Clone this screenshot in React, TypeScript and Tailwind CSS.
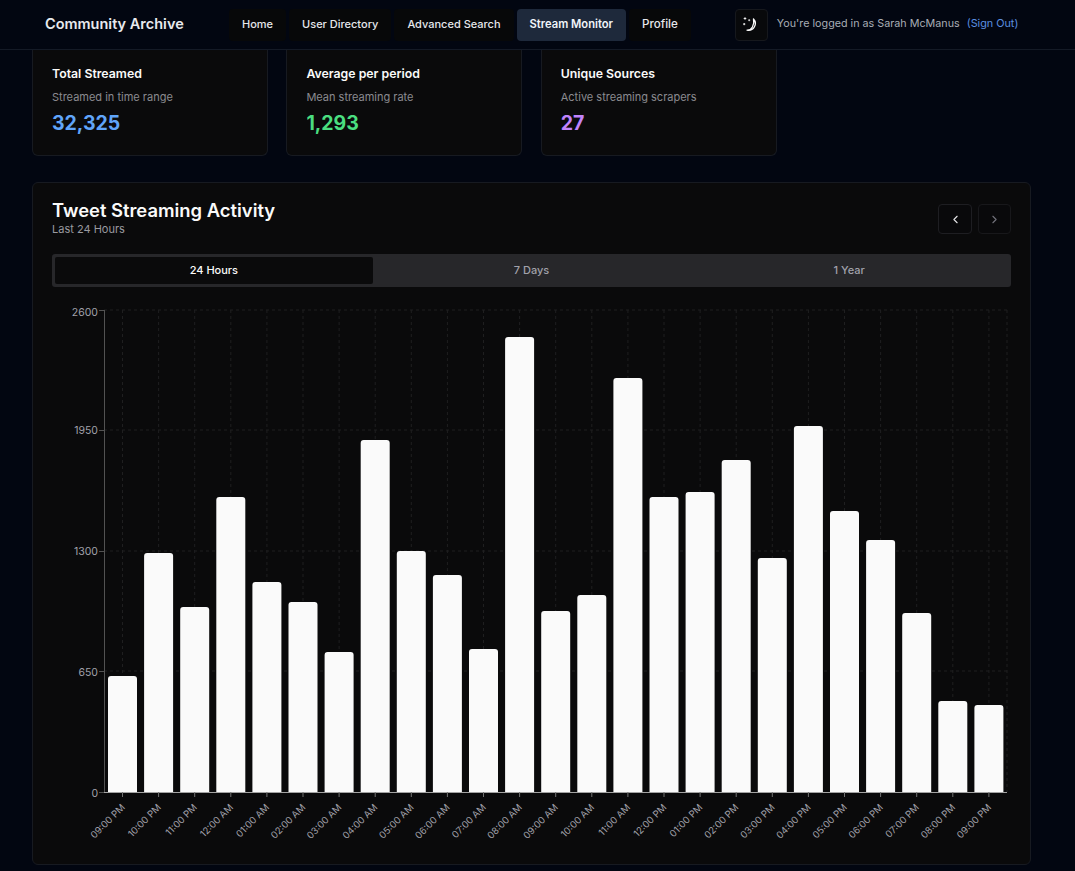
import { ChevronLeft, ChevronRight } from 'lucide-react'

const navItems = [
  { label: 'Home', cls: 'bg-[#070809] text-[11px] font-medium text-[#e5e7eb]' },
  { label: 'User Directory', cls: 'bg-[#070809] text-[11px] font-medium text-[#e5e7eb]' },
  { label: 'Advanced Search', cls: 'bg-[#070809] text-[11px] font-medium text-[#e5e7eb]' },
  { label: 'Stream Monitor', cls: 'bg-[#1e293b] text-[11.2px] font-semibold text-[#f1f5f9]' },
  { label: 'Profile', cls: 'bg-[#070809] text-[11.6px] font-medium text-[#e5e7eb]' },
]

const stats = [
  { title: 'Total Streamed', sub: 'Streamed in time range', value: '32,325', color: 'text-[#60a5fa]' },
  { title: 'Average per period', sub: 'Mean streaming rate', value: '1,293', color: 'text-[#4ade80]' },
  { title: 'Unique Sources', sub: 'Active streaming scrapers', value: '27', color: 'text-[#c084fc]' },
]

const hours = [
  '09:00 PM', '10:00 PM', '11:00 PM', '12:00 AM', '01:00 AM', '02:00 AM', '03:00 AM', '04:00 AM', '05:00 AM',
  '06:00 AM', '07:00 AM', '08:00 AM', '09:00 AM', '10:00 AM', '11:00 AM', '12:00 PM', '01:00 PM', '02:00 PM',
  '03:00 PM', '04:00 PM', '05:00 PM', '06:00 PM', '07:00 PM', '08:00 PM', '09:00 PM',
]

// top edge of each bar, chart-local y
const barTops = [
  376, 253, 307, 197, 282, 302, 352, 140, 251, 275, 349, 37, 311, 295, 78, 197, 192, 160, 258, 126, 211, 240, 313, 401, 405,
]

const yTicks = [
  { label: '2600', y: 10, dy: 6 },
  { label: '1950', y: 130, dy: 4 },
  { label: '1300', y: 251, dy: 4 },
  { label: '650', y: 371, dy: 5 },
  { label: '0', y: 492, dy: 5 },
]

const BASE = 492
const STEP = 36.1

const barPath = (x: number, top: number) =>
  `M${x} ${BASE}V${top + 3}Q${x} ${top} ${x + 3} ${top}H${x + 26}Q${x + 29} ${top} ${x + 29} ${top + 3}V${BASE}Z`

const Chart = () => (
  <svg width="959" height="550" viewBox="0 0 959 550" className="block" style={{ fontFamily: 'Inter, sans-serif' }}>
    {yTicks.slice(0, 4).map((t) => (
      <line key={t.y} x1="52" x2="955" y1={t.y} y2={t.y} className="stroke-[#1f1f20]" strokeDasharray="3 3" />
    ))}
    {hours.map((_, i) => (
      <line
        key={i}
        x1={70.5 + i * STEP}
        x2={70.5 + i * STEP}
        y1="10"
        y2={BASE}
        className="stroke-[#1f1f20]"
        strokeDasharray="3 3"
      />
    ))}
    <line x1="955" x2="955" y1="10" y2={BASE} className="stroke-[#1f1f20]" strokeDasharray="3 3" />

    {barTops.map((top, i) => (
      <path key={i} d={barPath(56 + i * STEP, top)} className="fill-[#fafafa]" />
    ))}

    <line x1="52.5" x2="52.5" y1="10" y2={BASE} className="stroke-[#525252]" />
    <line x1="52" x2="955" y1={BASE + 0.5} y2={BASE + 0.5} className="stroke-[#a3a3a3]" />

    {yTicks.map((t) => (
      <g key={t.y}>
        <line x1="47" x2="52" y1={t.y + 0.5} y2={t.y + 0.5} className="stroke-[#525252]" />
        <text x="46" y={t.y + t.dy} textAnchor="end" className="fill-[#a1a1aa] text-[10.5px]">
          {t.label}
        </text>
      </g>
    ))}

    {hours.map((h, i) => {
      const cx = 70.5 + i * STEP
      return (
        <g key={i}>
          <line x1={cx} x2={cx} y1={BASE} y2={BASE + 5} className="stroke-[#737373]" />
          <text
            x={cx + 3}
            y={BASE + 16}
            textAnchor="end"
            transform={`rotate(-45 ${cx + 3} ${BASE + 16})`}
            className="fill-[#a1a1aa] text-[9.5px]"
          >
            {h}
          </text>
        </g>
      )
    })}
  </svg>
)

const MoonStars = () => (
  <svg width="16" height="16" viewBox="0 0 16 16" fill="none" className="text-[#fafafa]">
    <path
      d="M10.500 2A6.800 6.800 0 0 1 4 13.200C8.500 13.500 11.800 8 10.500 2Z"
      stroke="currentColor"
      strokeWidth="1.300"
      strokeLinejoin="round"
    />
    <path d="M2 .2v2.600M.7 1.500h2.600" stroke="currentColor" strokeWidth=".9" />
    <path d="M6.200 2.200v2M5.200 3.200h2" stroke="currentColor" strokeWidth=".8" />
    <path d="M1.200 6v2.200M.1 7.100h2.200" stroke="currentColor" strokeWidth=".9" />
  </svg>
)

export default function App() {
  return (
    <div className="h-[871px] overflow-hidden bg-[#020611] font-['Inter',sans-serif] text-[#fafafa]">
      <header className="flex h-[50px] items-center border-b border-[#141a26] pl-[45px]">
        <span className="-mt-px w-[184px] text-[14.5px] font-semibold text-[#e8eaee]">Community Archive</span>
        <nav className="flex gap-[3px]">
          {navItems.map((item) => (
            <a key={item.label} className={`flex h-[32px] items-center rounded-[4px] px-[13px] ${item.cls}`}>
              {item.label}
            </a>
          ))}
        </nav>
        <button className="ml-[44px] flex h-[32px] w-[33px] items-center justify-center rounded-[4px] border border-[#16181d] bg-[#08090b]">
          <MoonStars />
        </button>
        <span className="ml-[9px] text-[10.75px] text-[#a8adb5]">You're logged in as Sarah McManus</span>
        <a className="ml-[7px] text-[10.8px] text-[#5a8fe0]">(Sign Out)</a>
      </header>

      <main className="ml-[32px] w-[999px]">
        <section className="grid grid-cols-4 gap-[18.5px]">
          {stats.map((s) => (
            <div
              key={s.title}
              className="h-[106px] rounded-b-[6px] border border-t-0 border-[#171a21] bg-[#0a0a0b] px-[19px] pt-[16px]"
            >
              <h3 className="text-[12.3px] leading-[15px] font-semibold text-[#fafafa]">{s.title}</h3>
              <p className="mt-[9px] text-[11px] leading-[14px] text-[#8b8b90]">{s.sub}</p>
              <p className={`mt-[7px] text-[19.5px] leading-[24px] font-bold ${s.color}`}>{s.value}</p>
            </div>
          ))}
        </section>

        <section className="mt-[26px] h-[683px] rounded-[6px] border border-[#171a21] bg-[#0a0a0b] px-[19px] pt-[16px]">
          <div className="flex items-start justify-between">
            <div>
              <h2 className="text-[18.4px] leading-[22px] font-semibold text-[#fafafa]">Tweet Streaming Activity</h2>
              <p className="mt-px text-[11px] leading-[14px] text-[#9a9aa0]">Last 24 Hours</p>
            </div>
            <div className="mt-[5px] flex gap-[6px]">
              <button className="flex h-[30px] w-[34px] items-center justify-center rounded-[4px] border border-[#1e1e22] bg-[#09090b]">
                <ChevronLeft size={13} className="text-[#e4e4e7]" />
              </button>
              <button className="flex h-[30px] w-[33px] items-center justify-center rounded-[4px] border border-[#18181b] bg-[#09090b]">
                <ChevronRight size={13} className="text-[#71717a]" />
              </button>
            </div>
          </div>

          <div className="mt-[18px] grid h-[33px] grid-cols-3 rounded-[3px] bg-[#27272a] p-[3px]">
            <div className="flex items-center justify-center rounded-[2px] bg-[#0a0a0b] text-[11px] font-medium text-[#fafafa]">
              24 Hours
            </div>
            <div className="flex items-center justify-center text-[11px] font-medium text-[#a1a1aa]">7 Days</div>
            <div className="flex items-center justify-center text-[11px] font-medium text-[#a1a1aa]">1 Year</div>
          </div>

          <div className="mt-[13px]">
            <Chart />
          </div>
        </section>
      </main>
    </div>
  )
}
